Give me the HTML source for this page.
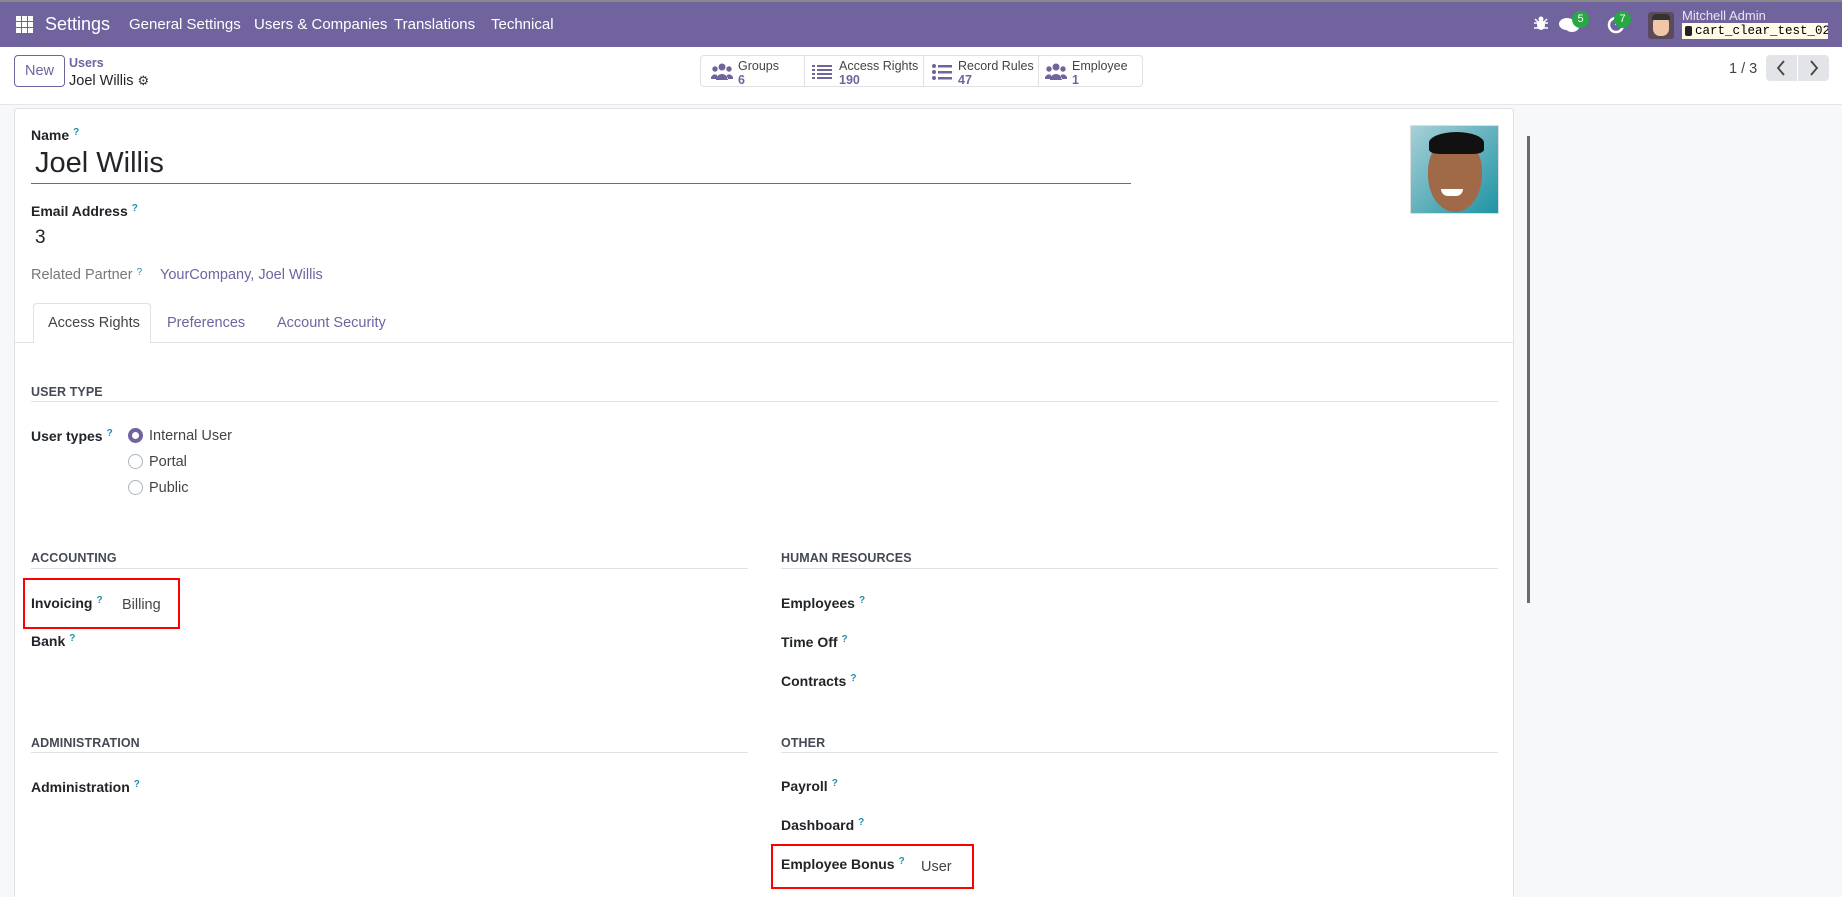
<!DOCTYPE html>
<html style="overflow:hidden;height:897px"><head><meta charset="utf-8"><style>
*{margin:0;padding:0;box-sizing:border-box}
body{width:1842px;height:897px;overflow:hidden;background:#f7f8fa;font-family:"Liberation Sans",sans-serif;color:#212529;position:relative}
.a{position:absolute;white-space:nowrap;line-height:1}
.nav{position:absolute;left:0;top:0;width:1842px;height:47px;background:#71639e;border-top:2px solid #8a8a8a}
.nav .a{color:#fff;font-size:15px}
.lbl{font-size:14px;font-weight:bold;color:#212529}
.q{color:#1b8fb0;font-size:10px;font-weight:bold;vertical-align:top;margin-left:4px}
.hd{font-size:12.5px;font-weight:bold;color:#444a52;letter-spacing:.1px}
.ln{position:absolute;height:1px;background:#dee2e6}
.val{font-size:14.5px;color:#444}
.rb{position:absolute;width:15px;height:15px;border-radius:50%;border:1px solid #adb5bd;background:#fff}
.red{position:absolute;border:2px solid #f00}
.bb{position:absolute;top:55px;height:32px;border-right:1px solid #dee2e6}
.bb .t1{position:absolute;font-size:12.5px;color:#444;top:4px}
.bb .t2{position:absolute;font-size:12.5px;color:#71639e;font-weight:bold;top:18px}
</style></head><body>
<div class="a" style="left:0;top:47px;width:1842px;height:57px;background:#fff"></div>
<div class="nav">
 <svg class="a" style="left:16px;top:14px" width="17" height="17" viewBox="0 0 17 17" fill="#fff"><rect x="0" y="0" width="5" height="5"/><rect x="6" y="0" width="5" height="5"/><rect x="12" y="0" width="5" height="5"/><rect x="0" y="6" width="5" height="5"/><rect x="6" y="6" width="5" height="5"/><rect x="12" y="6" width="5" height="5"/><rect x="0" y="12" width="5" height="5"/><rect x="6" y="12" width="5" height="5"/><rect x="12" y="12" width="5" height="5"/></svg>
 <div class="a" style="left:45px;top:13px;font-size:18px">Settings</div>
 <div class="a" style="left:129px;top:15px">General Settings</div>
 <div class="a" style="left:254px;top:15px">Users &amp; Companies</div>
 <div class="a" style="left:394px;top:15px">Translations</div>
 <div class="a" style="left:491px;top:15px">Technical</div>
 <svg class="a" style="left:1534px;top:14px" width="14" height="15" viewBox="0 0 14 15" fill="#fff"><ellipse cx="7" cy="9" rx="4" ry="5"/><circle cx="7" cy="3" r="2.5"/><path d="M0 7h14M0 12h14M1 3l3 3M13 3l-3 3" stroke="#fff" stroke-width="1.5"/></svg>
 <svg class="a" style="left:1559px;top:15px" width="20" height="16" viewBox="0 0 20 16" fill="#fff"><ellipse cx="8" cy="7" rx="8" ry="6"/><ellipse cx="13" cy="10" rx="7" ry="5"/></svg>
 <div class="a" style="left:1572px;top:9px;width:17px;height:17px;border-radius:50%;background:#28a745;font-size:11px;text-align:center;line-height:17px">5</div>
 <svg class="a" style="left:1607px;top:14px" width="18" height="18" viewBox="0 0 18 18"><circle cx="9" cy="9" r="7" fill="none" stroke="#fff" stroke-width="2.5"/><path d="M9 4v5" stroke="#fff" stroke-width="2"/></svg>
 <div class="a" style="left:1614px;top:9px;width:17px;height:17px;border-radius:50%;background:#28a745;font-size:11px;text-align:center;line-height:17px">7</div>
 <div class="a" style="left:1648px;top:10px;width:26px;height:27px;border-radius:3px;background:#5a4a5a"><div style="position:absolute;left:5px;top:4px;width:16px;height:20px;border-radius:7px;background:#f0c8a8"></div><div style="position:absolute;left:4px;top:2px;width:18px;height:6px;border-radius:4px 4px 0 0;background:#333"></div></div>
 <div class="a" style="left:1682px;top:7px;font-size:13px;color:#e8e4f2">Mitchell Admin</div>
 <div class="a" style="left:1682px;top:21px;height:16px;width:146px;background:#fffbe6;color:#000;font-family:'Liberation Mono',monospace;font-size:12.5px;line-height:16px;padding-left:13px;overflow:hidden">cart_clear_test_02<span style="position:absolute;left:3px;top:3px;width:7px;height:10px;background:#222;border-radius:2px"></span></div>
</div>

<div class="a" style="left:14px;top:55px;width:51px;height:32px;border:1px solid #71639e;border-radius:4px;color:#71639e;font-size:14.5px;text-align:center;line-height:30px">New</div>
<div class="a" style="left:69px;top:57px;font-size:12.5px;color:#71639e;font-weight:bold">Users</div>
<div class="a" style="left:69px;top:74px;font-size:14.5px;color:#212529">Joel Willis <span style="font-size:13px;color:#333">&#9881;</span></div>

<div class="a" style="left:700px;top:55px;width:443px;height:32px;border:1px solid #dee2e6;border-radius:4px;background:#fff"></div>
<div class="bb" style="left:700px;width:105px"><svg style="position:absolute;left:11px;top:8px" width="22" height="18" viewBox="0 0 22 18" fill="#71639e"><circle cx="11" cy="4" r="3.5"/><circle cx="4" cy="6" r="2.7"/><circle cx="18" cy="6" r="2.7"/><path d="M5 17a6 6 0 0 1 12 0zM0 16a4 4 0 0 1 6-4v4zM22 16a4 4 0 0 0-6-4v4z"/></svg><span class="t1" style="left:38px">Groups</span><span class="t2" style="left:38px">6</span></div>
<div class="bb" style="left:805px;width:119px"><svg style="position:absolute;left:7px;top:9px" width="20" height="16" viewBox="0 0 20 16" fill="#71639e"><rect x="0" y="1" width="3" height="2"/><rect x="5" y="1" width="15" height="2"/><rect x="0" y="5" width="3" height="2"/><rect x="5" y="5" width="15" height="2"/><rect x="0" y="9" width="3" height="2"/><rect x="5" y="9" width="15" height="2"/><rect x="0" y="13" width="3" height="2"/><rect x="5" y="13" width="15" height="2"/></svg><span class="t1" style="left:34px">Access Rights</span><span class="t2" style="left:34px">190</span></div>
<div class="bb" style="left:924px;width:115px"><svg style="position:absolute;left:8px;top:9px" width="20" height="16" viewBox="0 0 20 16" fill="#71639e"><circle cx="2" cy="2" r="2"/><circle cx="2" cy="8" r="2"/><circle cx="2" cy="14" r="2"/><rect x="6" y="1" width="14" height="2.5"/><rect x="6" y="7" width="14" height="2.5"/><rect x="6" y="13" width="14" height="2.5"/></svg><span class="t1" style="left:34px">Record Rules</span><span class="t2" style="left:34px">47</span></div>
<div class="bb" style="left:1039px;width:104px;border:0"><svg style="position:absolute;left:6px;top:8px" width="22" height="18" viewBox="0 0 22 18" fill="#71639e"><circle cx="11" cy="4" r="3.5"/><circle cx="4" cy="6" r="2.7"/><circle cx="18" cy="6" r="2.7"/><path d="M5 17a6 6 0 0 1 12 0zM0 16a4 4 0 0 1 6-4v4zM22 16a4 4 0 0 0-6-4v4z"/></svg><span class="t1" style="left:33px">Employee</span><span class="t2" style="left:33px">1</span></div>

<div class="a" style="left:1729px;top:62px;font-size:14.5px;color:#444">1 / 3</div>
<div class="a" style="left:1766px;top:55px;width:31px;height:26px;background:#e2e4e8;border-radius:4px 0 0 4px"></div>
<div class="a" style="left:1798px;top:55px;width:31px;height:26px;background:#e2e4e8;border-radius:0 4px 4px 0"></div>
<svg class="a" style="left:1775px;top:60px" width="12" height="16" viewBox="0 0 12 16"><path d="M9 1L3 8l6 7" fill="none" stroke="#444" stroke-width="1.8"/></svg>
<svg class="a" style="left:1808px;top:60px" width="12" height="16" viewBox="0 0 12 16"><path d="M3 1l6 7-6 7" fill="none" stroke="#444" stroke-width="1.8"/></svg>
<div class="a" style="left:0;top:104px;width:1842px;height:1px;background:#e4e6ea"></div>

<div class="a" style="left:14px;top:108px;width:1500px;height:789px;background:#fff;border:1px solid #dee2e6;border-bottom:0;border-radius:4px 4px 0 0"></div>
<div class="a" style="left:1527px;top:136px;width:3px;height:467px;background:#6b6b6b"></div>

<div class="a lbl" style="left:31px;top:128px">Name<span class="q">?</span></div>
<div class="a" style="left:35px;top:149px;font-size:29px;color:#212529">Joel Willis</div>
<div class="a" style="left:31px;top:183px;width:1100px;height:1px;background:#71639e"></div>
<div class="a lbl" style="left:31px;top:204px">Email Address<span class="q">?</span></div>
<div class="a" style="left:35px;top:228px;font-size:19px">3</div>
<div class="a" style="left:31px;top:268px;font-size:14.5px;color:#777">Related Partner<span class="q" style="font-weight:normal">?</span></div>
<div class="a" style="left:160px;top:268px;font-size:14.5px;color:#71639e">YourCompany, Joel Willis</div>

<div class="a" style="left:1410px;top:125px;width:89px;height:89px;border:1px solid #ddd;background:linear-gradient(135deg,#a8d0d8,#1e94a4);overflow:hidden">
 <div style="position:absolute;left:17px;top:12px;width:54px;height:74px;border-radius:45% 45% 50% 50%;background:#a06a48"></div>
 <div style="position:absolute;left:18px;top:6px;width:55px;height:22px;border-radius:50% 50% 20% 20%;background:#111"></div>
 <div style="position:absolute;left:30px;top:63px;width:22px;height:7px;border-radius:0 0 10px 10px;background:#fff"></div>
</div>

<div class="a" style="left:33px;top:303px;width:118px;height:40px;border:1px solid #dee2e6;border-bottom:0;border-radius:4px 4px 0 0;background:#fff;z-index:2"></div>
<div class="a" style="left:48px;top:316px;font-size:14.5px;color:#444;z-index:3">Access Rights</div>
<div class="a" style="left:167px;top:316px;font-size:14.5px;color:#71639e">Preferences</div>
<div class="a" style="left:277px;top:316px;font-size:14.5px;color:#71639e">Account Security</div>
<div class="ln" style="left:14px;top:342px;width:1500px"></div>

<div class="a hd" style="left:31px;top:386px">USER TYPE</div>
<div class="ln" style="left:31px;top:401px;width:1467px"></div>
<div class="a lbl" style="left:31px;top:429px">User types<span class="q">?</span></div>
<div class="rb" style="left:128px;top:428px;border:4px solid #71639e"></div>
<div class="a val" style="left:149px;top:429px">Internal User</div>
<div class="rb" style="left:128px;top:454px"></div>
<div class="a val" style="left:149px;top:455px">Portal</div>
<div class="rb" style="left:128px;top:480px"></div>
<div class="a val" style="left:149px;top:481px">Public</div>

<div class="a hd" style="left:31px;top:552px">ACCOUNTING</div>
<div class="ln" style="left:31px;top:568px;width:717px"></div>
<div class="a hd" style="left:781px;top:552px">HUMAN RESOURCES</div>
<div class="ln" style="left:781px;top:568px;width:717px"></div>

<div class="red" style="left:23px;top:578px;width:157px;height:51px"></div>
<div class="a lbl" style="left:31px;top:596px">Invoicing<span class="q">?</span></div>
<div class="a val" style="left:122px;top:598px">Billing</div>
<div class="a lbl" style="left:31px;top:634px">Bank<span class="q">?</span></div>

<div class="a lbl" style="left:781px;top:596px">Employees<span class="q">?</span></div>
<div class="a lbl" style="left:781px;top:635px">Time Off<span class="q">?</span></div>
<div class="a lbl" style="left:781px;top:674px">Contracts<span class="q">?</span></div>

<div class="a hd" style="left:31px;top:737px">ADMINISTRATION</div>
<div class="ln" style="left:31px;top:752px;width:717px"></div>
<div class="a hd" style="left:781px;top:737px">OTHER</div>
<div class="ln" style="left:781px;top:752px;width:717px"></div>
<div class="a lbl" style="left:31px;top:780px">Administration<span class="q">?</span></div>
<div class="a lbl" style="left:781px;top:779px">Payroll<span class="q">?</span></div>
<div class="a lbl" style="left:781px;top:818px">Dashboard<span class="q">?</span></div>
<div class="red" style="left:771px;top:844px;width:203px;height:45px"></div>
<div class="a lbl" style="left:781px;top:857px">Employee Bonus<span class="q">?</span></div>
<div class="a val" style="left:921px;top:860px">User</div>
</body></html>
